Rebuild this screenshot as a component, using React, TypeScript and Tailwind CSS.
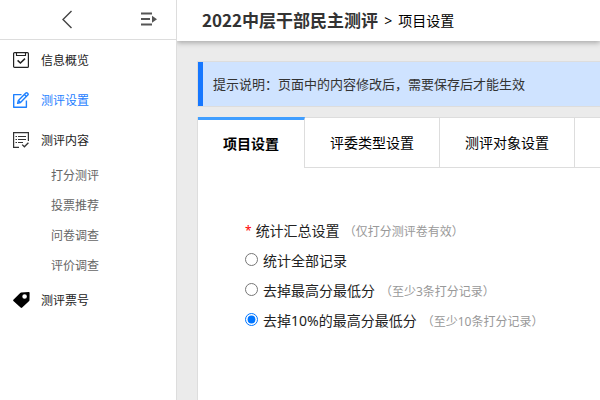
import React from "react";

const subItems = ["打分测评", "投票推荐", "问卷调查", "评价调查"];

const options = [
  { label: "统计全部记录", hint: "" },
  { label: "去掉最高分最低分", hint: "（至少3条打分记录）" },
  { label: "去掉10%的最高分最低分", hint: "（至少10条打分记录）" },
];

function OverviewIcon() {
  return (
    <svg className="size-4" viewBox="0 0 16 16" fill="none" stroke="#222" aria-hidden="true">
      <rect x="0.6" y="0.6" width="14.8" height="14.8" rx="1" strokeWidth="1.2" />
      <path d="M3.5 0.6V3.5H12.5V0.6" strokeWidth="1.1" />
      <path d="M4.6 8.4L7.4 11L12 6.6" strokeWidth="1.5" />
    </svg>
  );
}

function EditIcon() {
  return (
    <svg className="size-4" viewBox="0 0 16 16" fill="none" stroke="#1e80ff" strokeWidth="1.4" strokeLinejoin="round" aria-hidden="true">
      <path d="M8.5 2.6H0.7V15.3H13.4V8.5" />
      <path d="M4.6 11.4L5.4 8.4L12.8 1.1Q13.7 0.4 14.6 1.2Q15.6 2.1 14.8 3.1L7.5 10.5Z" />
      <path d="M11.4 2.6L13.4 4.5M5.4 8.4L7.5 10.5" />
    </svg>
  );
}

function ContentIcon() {
  return (
    <svg className="size-4" viewBox="0 0 16 16" fill="none" stroke="#333" aria-hidden="true">
      <path d="M6 15.4H0.6V0.6H15.4V9" strokeWidth="1.2" />
      <path d="M2.5 4.5H4M5 4.5H13M2.5 7.5H4M5 7.5H13M2.5 10.5H4M5 10.5H10" strokeWidth="1.1" />
      <path d="M9.2 12.6L11.4 14.8L15.4 10.8" strokeWidth="1.3" />
    </svg>
  );
}

function TagIcon() {
  return (
    <svg className="h-4 w-[17px]" viewBox="0 0 17 16" aria-hidden="true">
      <path
        fill="#000"
        fillRule="evenodd"
        d="M8.2 0.4L15.8 0Q16.6 0 16.6 0.8L16.5 8.2Q16.4 8.8 15.9 9.3L9.2 15.6Q8.4 16.2 7.6 15.5L0.4 9Q-0.2 8.3 0.4 7.7L7.2 0.9Q7.6 0.4 8.2 0.4ZM11.6 2.2A2.3 2.3 0 1 0 11.6 6.8A2.3 2.3 0 1 0 11.6 2.2Z"
      />
    </svg>
  );
}

function NavItem({ icon, label, active = false }: { icon: React.ReactNode; label: string; active?: boolean }) {
  return (
    <a href="#" className={`flex h-10 items-center pl-[13px] ${active ? "text-[#1e80ff]" : "text-[#222]"}`}>
      <span className="w-7">{icon}</span>
      <span className="pt-0.5">{label}</span>
    </a>
  );
}

function Tab({ label, active = false }: { label: string; active?: boolean }) {
  return (
    <button
      type="button"
      role="tab"
      aria-selected={active}
      className={
        active
          ? "h-[51px] shrink-0 border-t-3 border-r border-t-[#409eff] border-r-[#ddd] px-[25px] font-bold"
          : "h-[51px] shrink-0 border-y border-r border-[#ddd] px-[25px]"
      }
    >
      {label}
    </button>
  );
}

function Hint({ text }: { text: string }) {
  return <span className="pt-0.5 text-xs text-[#999]">{text}</span>;
}

export default function App() {
  return (
    <div className="flex min-h-screen bg-[#ebebeb] font-['Noto_Sans','Noto_Sans_CJK_SC',sans-serif] text-sm text-black">
      <aside className="relative z-10 w-[177px] shrink-0 border-r border-[#ddd] bg-white text-xs">
        <div className="flex h-10 items-center justify-between border-b border-[#ddd] pr-[19px] pl-[61px]">
          <button type="button" aria-label="返回">
            <svg className="h-5 w-3" viewBox="0 0 12 20" fill="none" stroke="#444" strokeWidth="1.4" aria-hidden="true">
              <path d="M10.5 1L2 9.5L10.5 18" />
            </svg>
          </button>
          <button type="button" aria-label="收起菜单">
            <svg className="h-4 w-[17px]" viewBox="0 0 17 16" aria-hidden="true">
              <path d="M1 1.5H12M1 7H10M1 12.5H12" stroke="#555" strokeWidth="1.9" />
              <path d="M12 3.8L17 7.3L12 10.8Z" fill="#555" />
            </svg>
          </button>
        </div>
        <nav>
          <NavItem icon={<OverviewIcon />} label="信息概览" />
          <NavItem icon={<EditIcon />} label="测评设置" active />
          <NavItem icon={<ContentIcon />} label="测评内容" />
          {subItems.map((item) => (
            <a key={item} href="#" className="flex h-[30px] items-center pt-0.5 pl-[51px] text-[#666]">
              {item}
            </a>
          ))}
          <NavItem icon={<TagIcon />} label="测评票号" />
        </nav>
      </aside>

      <div className="flex min-w-0 flex-1 flex-col">
        <header className="flex h-[41px] shrink-0 items-center gap-1.5 bg-white pl-[25px] shadow-[0_2px_5px_#aaa]">
          <h1 className="font-['Noto_Sans_CJK_SC',sans-serif] text-[17px] font-bold whitespace-nowrap text-[#333]">
            2022中层干部民主测评
          </h1>
          <span>&gt;</span>
          <span>项目设置</span>
        </header>

        <main className="flex min-w-0 flex-1 flex-col gap-[10px] overflow-hidden pt-5 pl-5">
          <div className="shrink-0 border-y border-l border-[#ddd]">
            <p className="flex h-11 items-center border-l-5 border-[#1677ff] bg-[#cfe3ff] pl-[10px] text-[13px] text-[#333]">
              提示说明：页面中的内容修改后，需要保存后才能生效
            </p>
          </div>

          <section className="flex-1 border-l border-[#ddd] bg-white">
            <div role="tablist" className="flex">
              <Tab label="项目设置" active />
              <Tab label="评委类型设置" />
              <Tab label="测评对象设置" />
              <div className="flex-1 border-y border-[#ddd]" />
            </div>

            <div role="radiogroup" aria-labelledby="summary-title" className="px-[47px] pt-12 text-[#222]">
              <div className="flex h-[30px] items-center gap-1">
                <span className="text-xs text-[#f00]">*</span>
                <span id="summary-title">统计汇总设置</span>
                <Hint text="（仅打分测评卷有效）" />
              </div>
              {options.map((option, index) => (
                <label key={option.label} className="flex h-[30px] items-center gap-[5px]">
                  <input type="radio" name="summary" defaultChecked={index === 2} className="mb-1 size-[13px]" />
                  <span>{option.label}</span>
                  {option.hint && <Hint text={option.hint} />}
                </label>
              ))}
            </div>
          </section>
        </main>
      </div>
    </div>
  );
}
